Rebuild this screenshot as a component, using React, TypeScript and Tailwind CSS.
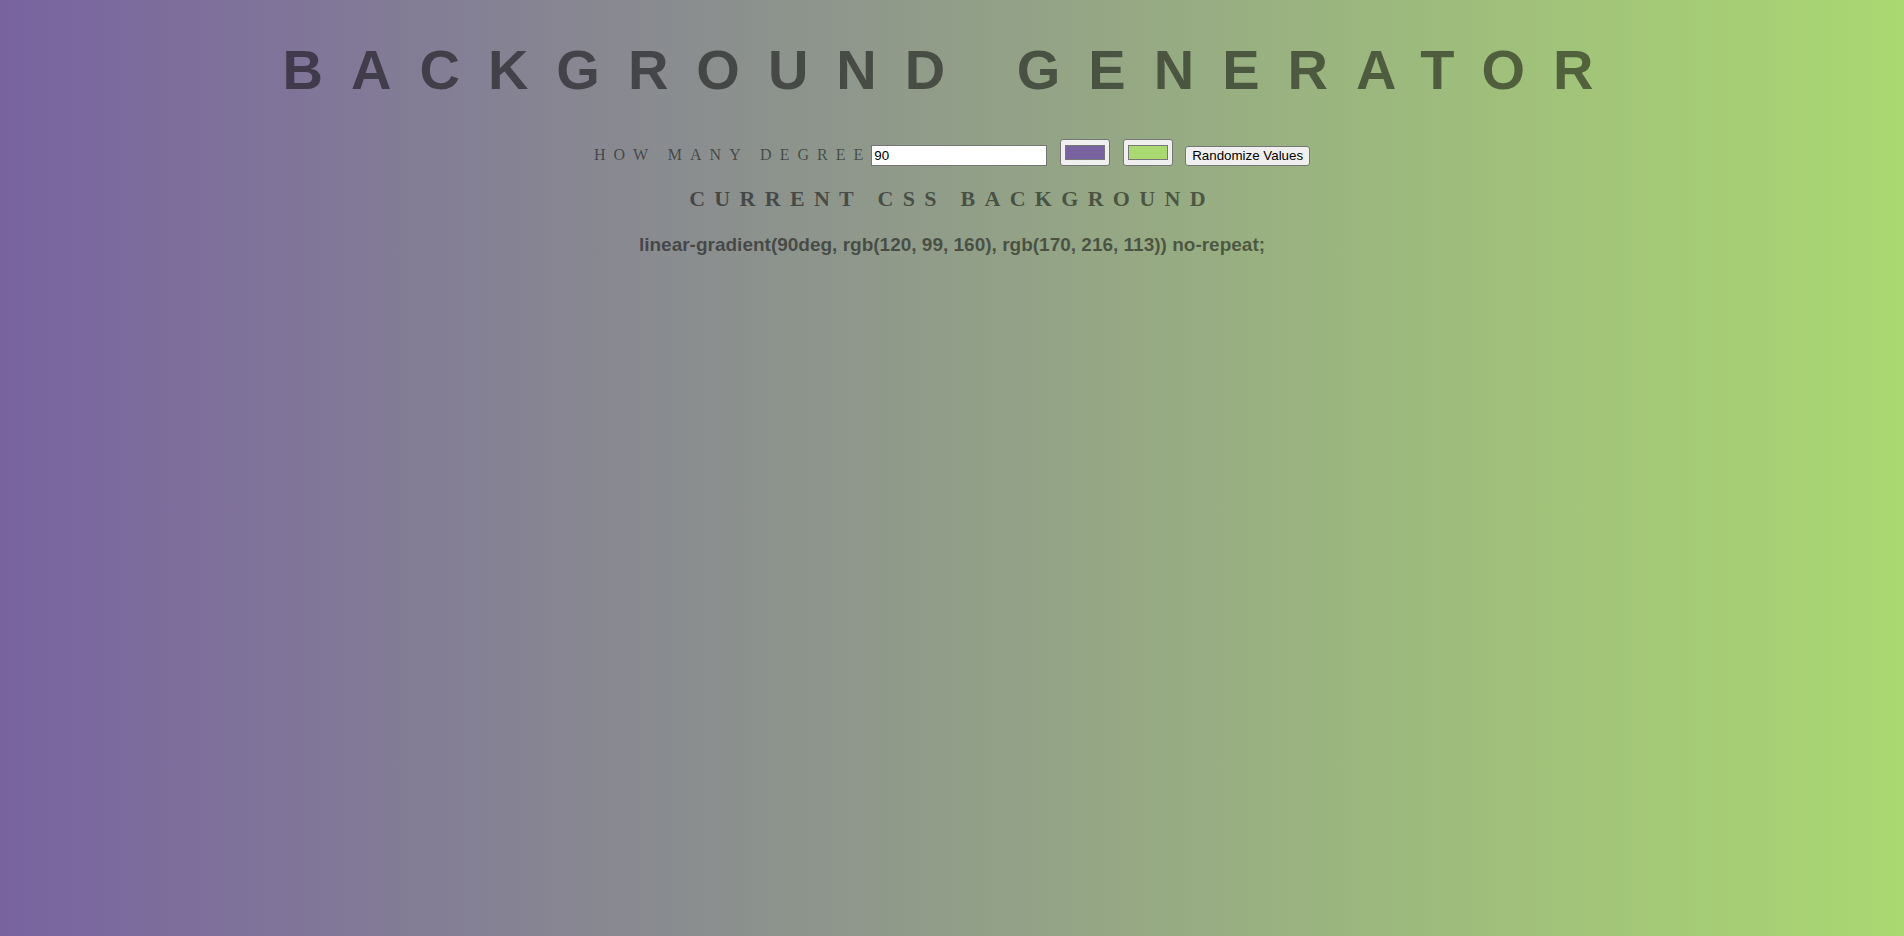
import * as React from "react";

const toHex = (n: number) => n.toString(16).padStart(2, "0");

const hexToRgb = (hex: string) => {
  const v = hex.replace("#", "");
  return `rgb(${parseInt(v.slice(0, 2), 16)}, ${parseInt(v.slice(2, 4), 16)}, ${parseInt(v.slice(4, 6), 16)})`;
};

const randomHex = () =>
  "#" + [0, 0, 0].map(() => toHex(Math.floor(Math.random() * 256))).join("");

const ColorBox = ({ value, onChange }: { value: string; onChange: (v: string) => void }) => {
  return (
    <label className="relative flex h-[27px] w-[50px] cursor-pointer rounded-[3px] border border-[#767676] bg-[#efefef] px-[4px] py-[5px]">
      <span
        className="block h-full w-full border border-[#777777]"
        style={{ backgroundColor: value }}
      />
      <input
        type="color"
        value={value}
        onChange={(e) => onChange(e.target.value)}
        className="absolute inset-0 h-full w-full cursor-pointer opacity-0"
      />
    </label>
  );
};

const App = () => {
  const [degree, setDegree] = React.useState("90");
  const [color1, setColor1] = React.useState("#7863a0");
  const [color2, setColor2] = React.useState("#aad871");

  const cssText = `linear-gradient(${degree}deg, ${hexToRgb(color1)}, ${hexToRgb(color2)}) no-repeat;`;

  const randomize = () => {
    setColor1(randomHex());
    setColor2(randomHex());
    setDegree(String(Math.floor(Math.random() * 360)));
  };

  const controlFont = "font-['Liberation_Sans',Arial,sans-serif] text-[13.333px] text-black";

  return (
    <main
      className="min-h-screen pt-[38px] text-black/50"
      style={{ background: `linear-gradient(${degree}deg, ${color1}, ${color2}) no-repeat` }}
    >
      {/* Title */}
      <h1 className="h-[63px] text-center font-['Liberation_Sans',Arial,sans-serif] text-[56px] font-bold leading-[63px] tracking-[28px]">
        BACKGROUND GENERATOR
      </h1>

      {/* Controls */}
      <div className="mt-[38px] flex h-[27px] items-end justify-center">
        <span className="mb-[3px] font-['Liberation_Serif','Times_New_Roman',serif] text-[16px] leading-4 tracking-[8px]">
          HOW MANY DEGREE
        </span>
        <input
          type="text"
          value={degree}
          onChange={(e) => setDegree(e.target.value)}
          className={`h-[21px] w-[176px] border border-[#767676] bg-white px-[2px] leading-[17px] outline-none ${controlFont}`}
        />
        <div className="ml-[13px]">
          <ColorBox value={color1} onChange={setColor1} />
        </div>
        <div className="ml-[13px]">
          <ColorBox value={color2} onChange={setColor2} />
        </div>
        <button
          onClick={randomize}
          className={`ml-[12px] h-[20px] rounded-[3px] border border-[#767676] bg-[#efefef] px-[6px] leading-[16px] ${controlFont}`}
        >
          Randomize Values
        </button>
      </div>

      <h2 className="mt-[21px] text-center font-['Liberation_Serif','Times_New_Roman',serif] text-[22px] font-bold leading-[24px] tracking-[9.3px]">
        CURRENT CSS BACKGROUND
      </h2>

      <h3 className="mt-[23px] text-center font-['Liberation_Sans',Arial,sans-serif] text-[19px] font-bold leading-[22px]">
        {cssText}
      </h3>
    </main>
  );
};

export default App;
